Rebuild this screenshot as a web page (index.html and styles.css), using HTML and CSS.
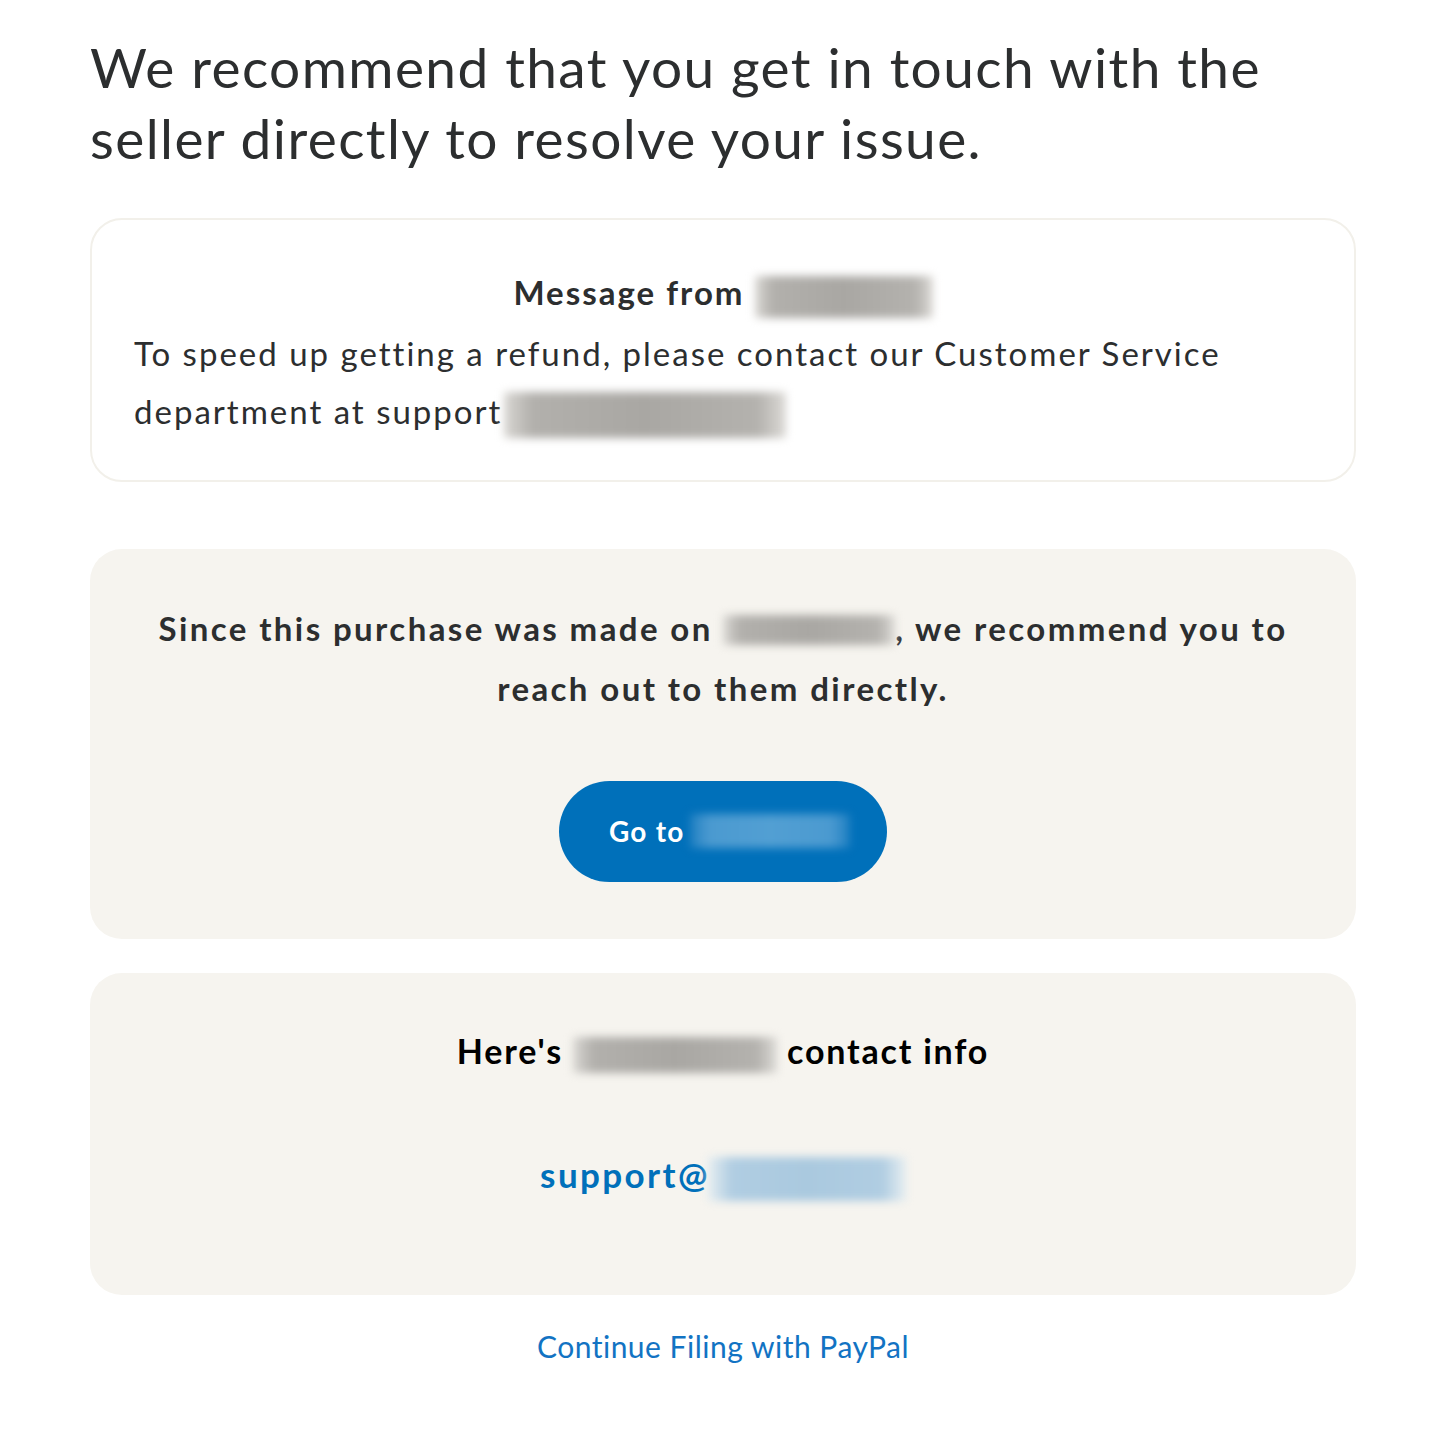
FILE: index.html
```html
<!DOCTYPE html>
<html lang="en">
<head>
<meta charset="utf-8">
<title>Contact the seller</title>
<link rel="stylesheet" href="styles.css">
</head>
<body>
<main class="page">
  <h1 class="title">We recommend that you get in touch with the seller directly to resolve your issue.</h1>

  <section class="card card-message">
    <h2 class="msg-title">Message from <span class="blur blur-gray w-msg"></span></h2>
    <p class="msg-body">To speed up getting a refund, please contact our Customer Service department at support<span class="blur blur-gray w-email"></span></p>
  </section>

  <section class="card card-tint card-purchase">
    <p class="purchase-text">Since this purchase was made on <span class="blur blur-gray w-site"></span>, we recommend you to reach out to them directly.</p>
    <a class="btn" href="#">Go to <span class="blur blur-blue w-btn"></span></a>
  </section>

  <section class="card card-tint card-contact">
    <h2 class="contact-title">Here's <span class="blur blur-gray w-name"></span> contact info</h2>
    <a class="contact-link" href="#">support@<span class="blur blur-light w-link"></span></a>
  </section>

  <div class="footer">
    <a class="continue" href="#">Continue Filing with PayPal</a>
  </div>
</main>
</body>
</html>
```

FILE: styles.css
```css
* { box-sizing: border-box; }

html, body {
  margin: 0;
  background: #ffffff;
}

body {
  font-family: Lato, "Open Sans", Arial, sans-serif;
  color: #2c2e2f;
}

.page {
  width: 1266px;
  margin-left: 90px;
  padding-top: 32px;
  display: flex;
  flex-direction: column;
}

.title {
  margin: 0 0 44px 0;
  font-size: 55px;
  font-weight: 400;
  line-height: 71px;
  letter-spacing: 1.4px;
  color: #2c2e2f;
}

.card {
  border-radius: 32px;
  width: 100%;
}

.card-message {
  border: 2px solid #f2f0ea;
  padding: 50px 42px 40px 42px;
  margin-bottom: 67px;
}

.msg-title {
  margin: 0 0 6px 0;
  text-align: center;
  font-size: 33px;
  font-weight: 700;
  line-height: 44px;
  letter-spacing: 2px;
  color: #2c2e2f;
}

.msg-body {
  margin: 0;
  font-size: 33px;
  line-height: 58px;
  letter-spacing: 2px;
  color: #2c2e2f;
}

.card-tint {
  background: #f6f4ef;
}

.card-purchase {
  padding: 49px 40px 57px 40px;
  display: flex;
  flex-direction: column;
  align-items: center;
  margin-bottom: 34px;
}

.purchase-text {
  margin: 0 0 63px 0;
  text-align: center;
  font-size: 33px;
  font-weight: 700;
  line-height: 60px;
  letter-spacing: 2.4px;
  color: #2c2e2f;
}

.btn {
  display: flex;
  align-items: center;
  width: 328px;
  height: 101px;
  padding-left: 50px;
  border-radius: 51px;
  background: #0070ba;
  color: #ffffff;
  text-decoration: none;
  font-size: 28px;
  font-weight: 700;
  letter-spacing: 1.2px;
}

.card-contact {
  padding: 55px 40px 94px 40px;
  display: flex;
  flex-direction: column;
  align-items: center;
}

.contact-title {
  margin: 0 0 77px 0;
  font-size: 34px;
  font-weight: 700;
  line-height: 46px;
  letter-spacing: 1.8px;
  color: #000000;
}

.contact-link {
  font-size: 35px;
  font-weight: 700;
  line-height: 46px;
  letter-spacing: 2.4px;
  color: #0070ba;
  text-decoration: none;
}

.footer {
  display: flex;
  justify-content: center;
  padding-top: 29px;
}

.continue {
  font-size: 30px;
  line-height: 44px;
  letter-spacing: 0.5px;
  color: #1273c3;
  text-decoration: none;
}

.blur {
  display: inline-block;
  vertical-align: middle;
  height: 38px;
  border-radius: 2px;
}

.blur-gray {
  background:
    linear-gradient(90deg, #d9d7d3 0%, #b2b0ac 10%, #a9a7a3 50%, #b4b2ae 90%, #dcdad6 100%);
  filter: blur(4px);
}

.blur-blue {
  background:
    linear-gradient(90deg, #1f7fc2 0%, #4b9ad0 12%, #529fd3 50%, #4b9ad0 88%, #1f7fc2 100%);
  filter: blur(4px);
}

.blur-light {
  background:
    linear-gradient(90deg, #e6eef1 0%, #b0cde2 12%, #aac9df 50%, #b0cde2 88%, #e6eef1 100%);
  filter: blur(4px);
}

.w-msg { width: 178px; height: 42px; }
.w-email { width: 282px; height: 46px; margin-left: 2px; }
.w-site { width: 172px; height: 30px; margin-top: -4px; }
.w-btn { width: 160px; height: 34px; margin-left: 6px; }
.w-name { width: 204px; height: 36px; }
.w-link { width: 198px; height: 44px; margin-left: -2px; }
```
